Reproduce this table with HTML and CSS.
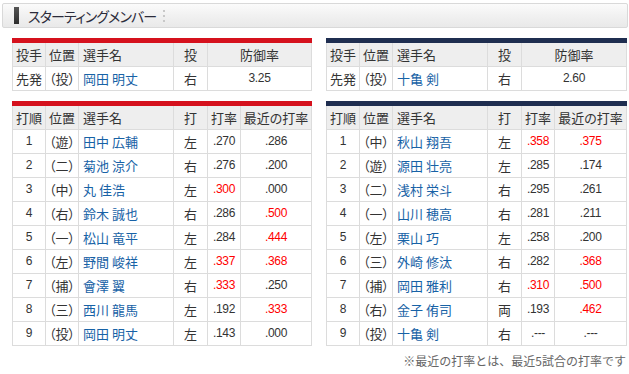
FILE: index.html
```html
<!DOCTYPE html>
<html lang="ja">
<head>
<meta charset="utf-8">
<title>スターティングメンバー</title>
<link rel="stylesheet" href="styles.css">
</head>
<body>
<div class="page">
  <div class="title-box">
    <span class="title-bar"></span>
    <h2 class="title">スターティングメンバー</h2>
    <span class="title-dots"></span>
  </div>

  <div class="teams">
    <div class="team team-red">
      <div class="tbl pitcher">
        <div class="row head">
          <div class="c">投手</div><div class="c">位置</div><div class="c l">選手名</div><div class="c">投</div><div class="c">防御率</div>
        </div>
        <div class="row">
          <div class="c">先発</div><div class="c">（投）</div><div class="c l"><a>岡田 明丈</a></div><div class="c">右</div><div class="c n">3.25</div>
        </div>
      </div>

      <div class="tbl batter">
        <div class="row head">
          <div class="c">打順</div><div class="c">位置</div><div class="c l">選手名</div><div class="c">打</div><div class="c">打率</div><div class="c">最近の打率</div>
        </div>
        <div class="row"><div class="c n">1</div><div class="c">（遊）</div><div class="c l"><a>田中 広輔</a></div><div class="c">左</div><div class="c n">.270</div><div class="c n">.286</div></div>
        <div class="row"><div class="c n">2</div><div class="c">（二）</div><div class="c l"><a>菊池 涼介</a></div><div class="c">右</div><div class="c n">.276</div><div class="c n">.200</div></div>
        <div class="row"><div class="c n">3</div><div class="c">（中）</div><div class="c l"><a>丸 佳浩</a></div><div class="c">左</div><div class="c n hot">.300</div><div class="c n">.000</div></div>
        <div class="row"><div class="c n">4</div><div class="c">（右）</div><div class="c l"><a>鈴木 誠也</a></div><div class="c">右</div><div class="c n">.286</div><div class="c n hot">.500</div></div>
        <div class="row"><div class="c n">5</div><div class="c">（一）</div><div class="c l"><a>松山 竜平</a></div><div class="c">左</div><div class="c n">.284</div><div class="c n hot">.444</div></div>
        <div class="row"><div class="c n">6</div><div class="c">（左）</div><div class="c l"><a>野間 峻祥</a></div><div class="c">左</div><div class="c n hot">.337</div><div class="c n hot">.368</div></div>
        <div class="row"><div class="c n">7</div><div class="c">（捕）</div><div class="c l"><a>會澤 翼</a></div><div class="c">右</div><div class="c n hot">.333</div><div class="c n">.250</div></div>
        <div class="row"><div class="c n">8</div><div class="c">（三）</div><div class="c l"><a>西川 龍馬</a></div><div class="c">左</div><div class="c n">.192</div><div class="c n hot">.333</div></div>
        <div class="row"><div class="c n">9</div><div class="c">（投）</div><div class="c l"><a>岡田 明丈</a></div><div class="c">左</div><div class="c n">.143</div><div class="c n">.000</div></div>
      </div>
    </div>

    <div class="team team-navy">
      <div class="tbl pitcher">
        <div class="row head">
          <div class="c">投手</div><div class="c">位置</div><div class="c l">選手名</div><div class="c">投</div><div class="c">防御率</div>
        </div>
        <div class="row">
          <div class="c">先発</div><div class="c">（投）</div><div class="c l"><a>十亀 剣</a></div><div class="c">右</div><div class="c n">2.60</div>
        </div>
      </div>

      <div class="tbl batter">
        <div class="row head">
          <div class="c">打順</div><div class="c">位置</div><div class="c l">選手名</div><div class="c">打</div><div class="c">打率</div><div class="c">最近の打率</div>
        </div>
        <div class="row"><div class="c n">1</div><div class="c">（中）</div><div class="c l"><a>秋山 翔吾</a></div><div class="c">左</div><div class="c n hot">.358</div><div class="c n hot">.375</div></div>
        <div class="row"><div class="c n">2</div><div class="c">（遊）</div><div class="c l"><a>源田 壮亮</a></div><div class="c">左</div><div class="c n">.285</div><div class="c n">.174</div></div>
        <div class="row"><div class="c n">3</div><div class="c">（二）</div><div class="c l"><a>浅村 栄斗</a></div><div class="c">右</div><div class="c n">.295</div><div class="c n">.261</div></div>
        <div class="row"><div class="c n">4</div><div class="c">（一）</div><div class="c l"><a>山川 穂高</a></div><div class="c">右</div><div class="c n">.281</div><div class="c n">.211</div></div>
        <div class="row"><div class="c n">5</div><div class="c">（左）</div><div class="c l"><a>栗山 巧</a></div><div class="c">左</div><div class="c n">.258</div><div class="c n">.200</div></div>
        <div class="row"><div class="c n">6</div><div class="c">（三）</div><div class="c l"><a>外崎 修汰</a></div><div class="c">右</div><div class="c n">.282</div><div class="c n hot">.368</div></div>
        <div class="row"><div class="c n">7</div><div class="c">（捕）</div><div class="c l"><a>岡田 雅利</a></div><div class="c">右</div><div class="c n hot">.310</div><div class="c n hot">.500</div></div>
        <div class="row"><div class="c n">8</div><div class="c">（右）</div><div class="c l"><a>金子 侑司</a></div><div class="c">両</div><div class="c n">.193</div><div class="c n hot">.462</div></div>
        <div class="row"><div class="c n">9</div><div class="c">（投）</div><div class="c l"><a>十亀 剣</a></div><div class="c">右</div><div class="c n">.---</div><div class="c n">.---</div></div>
      </div>
      <p class="note">※最近の打率とは、最近5試合の打率です</p>
    </div>
  </div>
</div>
</body>
</html>
```

FILE: styles.css
```css
* { box-sizing: border-box; }
html, body { margin: 0; padding: 0; background: #fff; }
body {
  font-family: "Liberation Sans", "Noto Sans CJK JP", sans-serif;
  color: #333;
  font-size: 13px;
}
.page { padding: 3px 1px 0 2px; }

.title-box {
  display: flex;
  align-items: center;
  height: 25px;
  border: 1px solid #d9d9d9;
  border-radius: 2px;
  background: linear-gradient(to bottom, #fbfbfb 0%, #f1f1f1 50%, #e9e9e9 100%);
  padding-left: 11px;
}
.title-bar {
  width: 5px;
  height: 17px;
  background: linear-gradient(to bottom, #555, #2e2e2e);
  margin-right: 9px;
}
.title {
  margin: 0;
  font-family: "Noto Sans CJK JP", sans-serif;
  font-weight: normal;
  font-size: 14px;
  line-height: 18px;
  font-feature-settings: "palt";
  letter-spacing: -0.9px;
  color: #2b2b3a;
}
.title-dots {
  width: 2px;
  height: 12px;
  margin-left: 7px;
  background: repeating-linear-gradient(to bottom, #c8c8c8 0 2px, transparent 2px 5px);
}

.teams {
  display: grid;
  grid-template-columns: 300px 301px;
  column-gap: 14px;
  margin: 10px 0 0 10px;
}
.team { display: flex; flex-direction: column; gap: 10px; }

.tbl { border-top: 5px solid #d5111d; }
.team-navy .tbl { border-top-color: #1f2e50; }

.row {
  display: grid;
  height: 24px;
  border-bottom: 1px solid #dcdcdc;
}
.pitcher .row { grid-template-columns: 33px 33px 95px 34px 1fr; }
.batter .row { grid-template-columns: 33px 33px 95px 34px 33px 1fr; }
.row.head { background: #eeeeee; }

.c {
  border-left: 1px solid #dcdcdc;
  text-align: center;
  line-height: 23px;
  white-space: nowrap;
  overflow: hidden;
  font-family: "Noto Sans CJK JP", sans-serif;
  font-feature-settings: "palt";
  font-size: 13px;
  color: #333;
}
.c:last-child { border-right: 1px solid #dcdcdc; }
.c.l { text-align: left; padding-left: 4px; }
.c.n { font-family: "Liberation Sans", sans-serif; font-size: 12px; letter-spacing: -0.3px; }
.c.hot { color: #ff0000; }
.c a { color: #1762a6; text-decoration: none; }

.note {
  margin: -3px 1px 0 0;
  text-align: right;
  font-family: "Noto Sans CJK JP", sans-serif;
  font-size: 12px;
  line-height: 16px;
  color: #666;
}
```
